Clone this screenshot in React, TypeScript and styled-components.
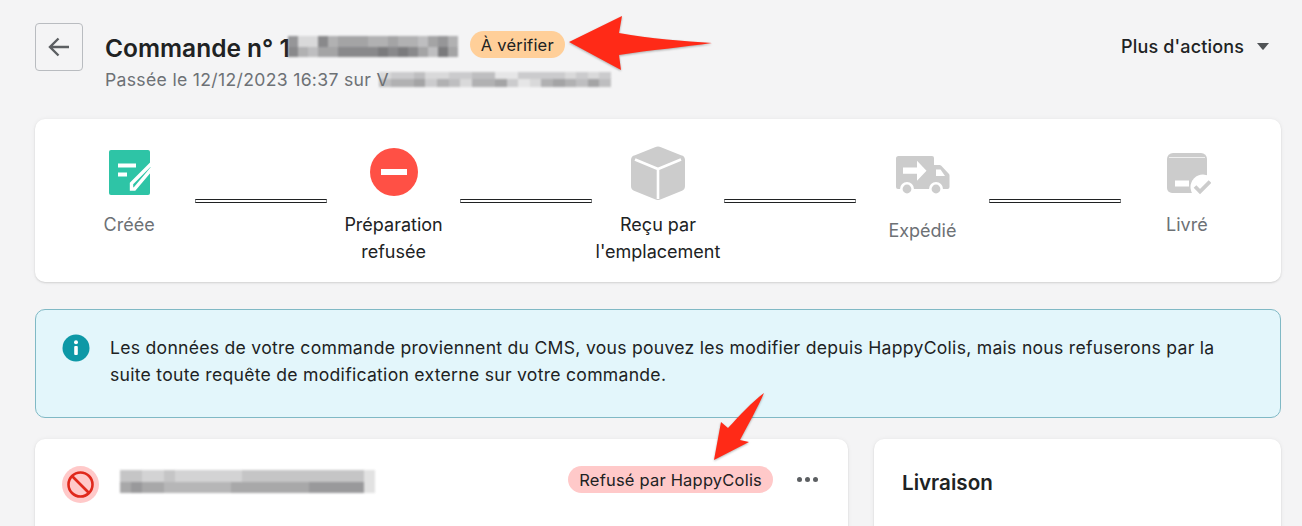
import React from "react";
import styled, {createGlobalStyle} from "styled-components";

const GlobalStyle = createGlobalStyle`
  html, body {
    margin: 0;
    padding: 0;
    height: 526px;
    overflow: hidden;
    background: #f4f4f5;
    font-family: Inter, 'Liberation Sans', sans-serif;
    color: #202223;
  }
`

const Page = styled.div`
  position: relative;
  width: 1302px;
  height: 526px;
  overflow: hidden;
  box-sizing: border-box;
  padding: 23px 21px 0 35px;
`

const Header = styled.header`
  display: flex;
  align-items: flex-start;
  gap: 22px;
  height: 96px;
`

const BackButton = styled.button`
  width: 48px;
  height: 48px;
  padding: 0;
  display: flex;
  align-items: center;
  justify-content: center;
  background: transparent;
  border: 1px solid #b9bcc0;
  border-radius: 4px;
`

const TitleBlock = styled.div`
  display: flex;
  flex-direction: column;
  flex-grow: 1;
  padding-top: 8px;
`

const TitleRow = styled.div`
  display: flex;
  align-items: flex-start;
  height: 37px;
`

const Title = styled.h1`
  margin: 0;
  font-size: 24.5px;
  line-height: 34px;
  font-weight: 600;
  white-space: nowrap;
`

const Subtitle = styled.div`
  display: flex;
  align-items: center;
  height: 22px;
  font-size: 17.6px;
  letter-spacing: 0.32px;
  color: #6d7175;
  white-space: nowrap;
`

const Badge = styled.span<{$bg: string}>`
  display: inline-flex;
  align-items: center;
  height: 27px;
  padding: 0 11px;
  border-radius: 14px;
  background: ${p => p.$bg};
  font-size: 16.5px;
  letter-spacing: 0.2px;
  color: #202223;
  white-space: nowrap;
`

const ActionsButton = styled.div`
  display: flex;
  align-items: center;
  gap: 13px;
  margin-top: 13px;
  padding-right: 12px;
  font-size: 18px;
  font-weight: 500;
  letter-spacing: 0.15px;
  white-space: nowrap;
`

const Card = styled.section`
  background: #fff;
  border-radius: 10px;
  box-shadow: 0 0 5px rgba(23, 24, 24, 0.05), 0 1px 2px rgba(0, 0, 0, 0.12);
`

const StepperCard = styled(Card)`
  height: 163px;
  box-sizing: border-box;
  padding: 26px 28px 0;
  display: grid;
  grid-template-columns: repeat(9, 1fr);
`

const Step = styled.div`
  display: flex;
  flex-direction: column;
  align-items: center;
`

const StepIcon = styled.div<{$height: number; $top: number}>`
  height: ${p => p.$height}px;
  box-sizing: border-box;
  padding-top: ${p => p.$top}px;
  display: flex;
  align-items: flex-start;
  justify-content: center;
`

const StepLabel = styled.div<{$muted?: boolean}>`
  font-size: 18px;
  line-height: 27px;
  text-align: center;
  white-space: nowrap;
  color: ${p => (p.$muted ? "#6d7175" : "#202223")};
`

const Connector = styled.div`
  height: 4px;
  margin-top: 54px;
  box-sizing: border-box;
  border-top: 1px solid #202223;
  border-bottom: 1px solid #202223;
  border-left: 1px solid #8a8c8e;
  border-right: 1px solid #8a8c8e;
`

const Alert = styled.div`
  margin-top: 27px;
  height: 109px;
  box-sizing: border-box;
  padding: 24px 50px 0 26px;
  display: flex;
  gap: 20px;
  background: #e3f6fb;
  border: 1px solid #80b9c5;
  border-radius: 10px;
`

const AlertText = styled.p`
  margin: 0;
  font-size: 17.6px;
  letter-spacing: 0.27px;
  line-height: 27px;
`

const Columns = styled.div`
  margin-top: 21px;
  display: grid;
  grid-template-columns: 813px 407px;
  gap: 26px;
`

const PanelCard = styled(Card)`
  height: 200px;
  box-sizing: border-box;
`

const OrderPanel = styled(PanelCard)`
  padding: 27px 30px 0 27px;
`

const DeliveryPanel = styled(PanelCard)`
  padding: 30px 28px 0;
`

const PanelRow = styled.div`
  display: flex;
  align-items: flex-start;
`

const PanelTitle = styled.h2`
  margin: 0;
  font-size: 20.6px;
  line-height: 28px;
  font-weight: 600;
`

const RowSpacer = styled.div`
  flex-grow: 1;
`

const MoreDots = styled.div`
  display: flex;
  gap: 3px;
  margin: 11px 0 0 24px;
`

const Dot = styled.span`
  width: 5px;
  height: 5px;
  border-radius: 50%;
  background: #5c5f62;
`

const Blur = styled.div<{$top: number; $left: number; $right: number}>`
  display: grid;
  margin: ${p => p.$top}px ${p => p.$right}px 0 ${p => p.$left}px;
  filter: blur(0.8px);
  flex-shrink: 0;
`

const BlurRow = styled.div<{$height: number}>`
  display: flex;
  height: ${p => p.$height}px;
`

const BlurCell = styled.span<{$width: number}>`
  width: ${p => p.$width}px;
`

const ArrowOverlay = styled.svg`
  position: absolute;
  left: 0;
  top: 0;
  pointer-events: none;
  filter: drop-shadow(0 1px 1px rgba(0, 0, 0, 0.3));
`

// pixelated patch standing in for hidden text, each string is one row of grey levels (0 = none, 9 = darkest)
function Redacted({rows, cell, rowHeight, top = 0, left = 0, right = 0}: {rows: string[]; cell: number; rowHeight: number; top?: number; left?: number; right?: number}) {
  return (
    <Blur $top={top} $left={left} $right={right}>
      {rows.map((row, i) => (
        <BlurRow key={i} $height={rowHeight}>
          {row.split("").map((c, j) => {
            const level = Number(c);
            return <BlurCell key={j} $width={cell} style={{background: `rgba(110,110,112,${level / 10})`}}/>
          })}
        </BlurRow>
      ))}
    </Blur>
  )
}

const BackIcon = () => (
  <svg width="22" height="20" viewBox="0 0 22 20" fill="none" stroke="#5c5f62" strokeWidth="2.4">
    <path d="M21 10H2M10.5 1.5 2 10l8.5 8.5"/>
  </svg>
)

const Caret = () => (
  <svg width="12" height="7" viewBox="0 0 12 7"><path d="M0 0h12L6.6 6.4a.8.8 0 0 1-1.2 0z" fill="#505356"/></svg>
)

const CreatedIcon = () => (
  <svg width="51" height="46" viewBox="-5 0 51 46">
    <rect width="41" height="45" rx="2" fill="#2ec4a6"/>
    <path d="M9 13.5h18v4H9zM9 22.5h9v4H9z" fill="#fff"/>
    <path d="M22.5 39V33.5L41.5 14.5l2.5 2.7L25.5 39z" fill="#2ec4a6" stroke="#fff" strokeWidth="3.4"/>
  </svg>
)

const RefusedIcon = () => (
  <svg width="48" height="48" viewBox="0 0 48 48">
    <circle cx="24" cy="24" r="24" fill="#ff5045"/>
    <rect x="11" y="21" width="26" height="6" fill="#fff"/>
  </svg>
)

const BoxIcon = () => (
  <svg width="54" height="54" viewBox="0 0 54 54">
    <path d="M24 1.2a7 7 0 0 1 6 0l20 8a5 5 0 0 1 4 5v26a5 5 0 0 1-3 4.5l-21 8.6a7 7 0 0 1-6 0L3 44.7a5 5 0 0 1-3-4.500v-26a5 5 0 0 1 4-5z" fill="#cccccc"/>
    <path d="M4 13.5 27 23l23-9.5M27 23v30" fill="none" stroke="#fff" strokeWidth="2.6"/>
  </svg>
)

const TruckIcon = () => (
  <svg width="58" height="40" viewBox="-3 0 58 40">
    <path d="M2.500 0H36a2 2 0 0 1 2 2v7h5.500a2 2 0 0 1 1.500.6l8 8.400a2 2 0 0 1 .5 1.400V31a2 2 0 0 1-2 2H2a2 2 0 0 1-2-2V2.500A2.500 2.500 0 0 1 2.500 0z" fill="#cccccc"/>
    <circle cx="11" cy="33" r="7" fill="#fff"/>
    <circle cx="40" cy="33" r="7" fill="#fff"/>
    <circle cx="11" cy="33" r="4.400" fill="#cccccc"/>
    <circle cx="40" cy="33" r="4.400" fill="#cccccc"/>
    <path d="M7 11.500h14V4.700l9.500 10-9.500 10v-7H7z" fill="#fff"/>
    <path d="M40 13.500h4.500l4.500 6.500h-9z" fill="#fff"/>
  </svg>
)

const DeliveredIcon = () => (
  <svg width="48" height="44" viewBox="-4 0 48 44">
    <path d="M6 0h28a6 6 0 0 1 6 6v29a5 5 0 0 1-5 5H5a5 5 0 0 1-5-5V6a6 6 0 0 1 6-6z" fill="#cccccc"/>
    <path d="M2 4.500h36" stroke="#fff" strokeWidth="1.200" opacity=".7"/>
    <rect x="8" y="27.500" width="14" height="6" fill="#fff"/>
    <circle cx="36" cy="34" r="12.500" fill="#fff"/>
    <path d="M28 33.500l5 5 10-10" fill="none" stroke="#cccccc" strokeWidth="3.800"/>
  </svg>
)

const InfoIcon = () => (
  <svg width="28" height="28" viewBox="0 0 28 28" style={{flexShrink: 0}}>
    <circle cx="14" cy="14" r="13.500" fill="#0d98a6"/>
    <rect x="12.200" y="12" width="3.600" height="9" rx="1" fill="#fff"/>
    <circle cx="14" cy="8.300" r="2" fill="#fff"/>
  </svg>
)

const ForbiddenIcon = () => (
  <svg width="37" height="37" viewBox="0 0 37 37" style={{flexShrink: 0}}>
    <circle cx="18.500" cy="18.500" r="18.500" fill="#ffc9c9"/>
    <circle cx="18.500" cy="18.500" r="12" fill="none" stroke="#e0281b" strokeWidth="2.600"/>
    <path d="M10 10l17 17" stroke="#e0281b" strokeWidth="2.600"/>
  </svg>
)

const TITLE_BLUR = ["72285666556554675", "85466888898986496"];
const SUB_BLUR = ["23342233441133332323", "45563542556312565464"];
const LINE_BLUR = ["44334333333444444444442", "67665555556666666777772"];

export default function App() {
  return (
    <Page>
      <GlobalStyle/>
      <Header>
        <BackButton aria-label="Retour"><BackIcon/></BackButton>
        <TitleBlock>
          <TitleRow>
            <Title>Commande n° 1</Title>
            <Redacted rows={TITLE_BLUR} cell={10} rowHeight={10.5} top={5} left={-2} right={12}/>
            <Badge $bg="#ffcf99">À vérifier</Badge>
          </TitleRow>
          <Subtitle>
            Passée le 12/12/2023 16:37 sur V
            <Redacted rows={SUB_BLUR} cell={11.6} rowHeight={7.5} left={-10}/>
          </Subtitle>
        </TitleBlock>
        <ActionsButton>Plus d'actions <Caret/></ActionsButton>
      </Header>

      <StepperCard>
        <Step>
          <StepIcon $height={66} $top={5}><CreatedIcon/></StepIcon>
          <StepLabel $muted>Créée</StepLabel>
        </Step>
        <Connector/>
        <Step>
          <StepIcon $height={66} $top={3}><RefusedIcon/></StepIcon>
          <StepLabel>Préparation<br/>refusée</StepLabel>
        </Step>
        <Connector/>
        <Step>
          <StepIcon $height={66} $top={1}><BoxIcon/></StepIcon>
          <StepLabel>Reçu par<br/>l'emplacement</StepLabel>
        </Step>
        <Connector/>
        <Step>
          <StepIcon $height={72} $top={11}><TruckIcon/></StepIcon>
          <StepLabel $muted>Expédié</StepLabel>
        </Step>
        <Connector/>
        <Step>
          <StepIcon $height={66} $top={8}><DeliveredIcon/></StepIcon>
          <StepLabel $muted>Livré</StepLabel>
        </Step>
      </StepperCard>

      <Alert>
        <InfoIcon/>
        <AlertText>
          Les données de votre commande proviennent du CMS, vous pouvez les modifier depuis HappyColis, mais nous refuserons par la suite toute requête de modification externe sur votre commande.
        </AlertText>
      </Alert>

      <Columns>
        <OrderPanel>
          <PanelRow>
            <ForbiddenIcon/>
            <Redacted rows={LINE_BLUR} cell={11.1} rowHeight={11.5} top={4} left={21}/>
            <RowSpacer/>
            <Badge $bg="#ffc9c9">Refusé par HappyColis</Badge>
            <MoreDots><Dot/><Dot/><Dot/></MoreDots>
          </PanelRow>
        </OrderPanel>
        <DeliveryPanel>
          <PanelTitle>Livraison</PanelTitle>
        </DeliveryPanel>
      </Columns>

      <ArrowOverlay width="1302" height="526" viewBox="0 0 1302 526">
        <path d="M569 42 622 16 619 33C650 39 685 41 712 43 685 47 650 50 619 55L621 70Z" fill="#ff2a17"/>
        <path d="M714 460 721 422 728 428C740 415 752 402 764 393 758 407 748 425 740 440L749 442Z" fill="#ff2a17"/>
      </ArrowOverlay>
    </Page>
  )
}
